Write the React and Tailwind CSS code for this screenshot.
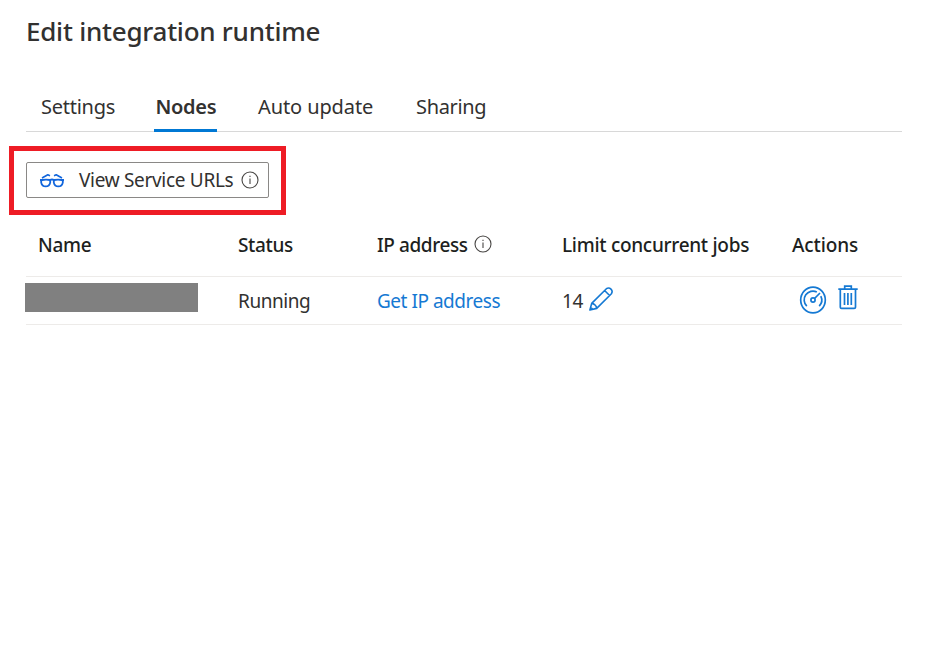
function InfoIcon() {
  return (
    <svg width="18" height="18" viewBox="0 0 18 18" fill="none" stroke="#484644" strokeWidth="1.1" className="block shrink-0">
      <circle cx="9" cy="9" r="8" />
      <path d="M9 7.4V13M9 4.8V6" />
    </svg>
  );
}

function GlassesIcon() {
  return (
    <svg width="26" height="16" viewBox="0 0 26 16" fill="none" stroke="#1266dc" strokeWidth="1.8" strokeLinejoin="round" className="mt-px block shrink-0">
      <path d="M1 7H3.2Q7 6.2 10.8 7Q13 6 15.2 7Q19 6.2 22.8 7H25" />
      <path d="M2.2 7V9.6A4.6 4.8 0 0 0 11.2 9.6V7M14.8 7V9.6A4.6 4.8 0 0 0 23.8 9.6V7" />
      <path d="M3 5L8.8 1.8L11 2.7M23 5L17.2 1.8L15 2.7" strokeWidth="1.6" />
    </svg>
  );
}

function PencilIcon() {
  return (
    <svg width="26" height="26" viewBox="0 0 26 26" fill="none" stroke="#1579d3" strokeWidth="1.6" strokeLinejoin="round" className="block shrink-0">
      <path d="M1.9 24L3.7 17.4L18.4 2.7A3.6 3.6 0 0 1 23.4 7.7L8.7 22.4ZM16.6 4.5L21.6 9.5M3.7 17.4C6.2 17.6 8.5 19.9 8.7 22.4M2.7 21.3L4.7 23.3" />
    </svg>
  );
}

function GaugeIcon() {
  return (
    <svg width="28" height="28" viewBox="0 0 28 28" fill="none" stroke="#1579d3" strokeWidth="1.7" className="block shrink-0">
      <ellipse cx="14" cy="14" rx="12.3" ry="12.9" />
      <path d="M7.8 20.2A8.8 8.8 0 0 1 17.8 6M21.8 10.2A8.8 8.8 0 0 1 20.2 20.2M15.5 12.5L21 7" />
      <circle cx="14" cy="14" r="2.1" />
    </svg>
  );
}

function TrashIcon() {
  return (
    <svg width="20" height="25" viewBox="0 0 20 25" fill="none" stroke="#1579d3" strokeWidth="1.7" className="block shrink-0">
      <path d="M0.3 4.2H19.7M6.7 4V1.2H13.3V4M2.3 4.4V22.2Q2.3 23.4 3.6 23.4H16.2Q17.5 23.4 17.5 22.2V4.4M6.5 8V20M9.9 8V20M13.3 8V20" />
    </svg>
  );
}

export default function App() {
  return (
    <main className="h-[658px] w-[925px] overflow-hidden bg-white pl-[26px] pr-[23px] font-['Noto_Sans',sans-serif] text-[#323130]">
      <h1 className="flex h-[84px] items-start pt-[13px] text-[26px] leading-[36px] font-medium whitespace-nowrap">
        <span className="tracking-[-0.24px]">Edit integration runtime</span>
      </h1>

      <nav className="flex h-[48px] border-b border-[#d8d8d8] text-[20px] leading-[44px] whitespace-nowrap">
        <button className="ml-[15px] w-[113px] pb-[2px] text-left tracking-[-0.25px]">Settings</button>
        <button className="h-[48px] w-[63px] border-b-[3px] border-[#0078d4] pl-[1.5px] text-left leading-[46px] font-semibold tracking-[-0.3px]">Nodes</button>
        <button className="ml-[41px] w-[158px] pb-[2px] text-left tracking-[-0.1px]">Auto update</button>
        <button className="pb-[2px] text-left tracking-[-0.35px]">Sharing</button>
      </nav>

      <div className="mt-[14px] -ml-[17px] h-[69px] w-[277px] border-[5px] border-[#ee1c25] pt-[11px] pl-[12px]">
        <button className="flex h-[36px] w-[243px] items-center rounded-[2px] border border-[#8a8886] pl-[12px] text-[19px] whitespace-nowrap">
          <GlassesIcon />
          <span className="ml-[14px] w-[162px] text-left tracking-[-0.31px]">View Service URLs</span>
          <InfoIcon />
        </button>
      </div>

      <section className="text-[19px] whitespace-nowrap">
        <div className="grid h-[62px] grid-cols-[212px_139px_185px_230px_1fr] border-b border-[#edebe9] pt-[15px] leading-[30px] font-medium text-[#201f1e]">
          <span className="pl-[12px] tracking-[-0.25px]">Name</span>
          <span className="tracking-[-0.35px]">Status</span>
          <span className="flex">
            <span className="w-[97px] tracking-[-0.42px]">IP address</span>
            <span className="pt-[5px]"><InfoIcon /></span>
          </span>
          <span className="tracking-[-0.29px]">Limit concurrent jobs</span>
          <span className="tracking-[-0.12px]">Actions</span>
        </div>
        <div className="grid h-[48px] grid-cols-[212px_139px_185px_230px_1fr] border-b border-[#edebe9] leading-[48px]">
          <span className="mt-[6px] -ml-px h-[29px] w-[173px] bg-[#808080]" />
          <span className="tracking-[-0.43px]">Running</span>
          <span className="tracking-[-0.47px] text-[#1579d3]">Get IP address</span>
          <span className="flex">
            <span className="w-[26px] tracking-[-0.3px]">14</span>
            <span className="pt-[9px]"><PencilIcon /></span>
          </span>
          <span className="flex pl-[7px]">
            <span className="pt-[9px]"><GaugeIcon /></span>
            <span className="ml-[11px] pt-[8px]"><TrashIcon /></span>
          </span>
        </div>
      </section>
    </main>
  );
}
